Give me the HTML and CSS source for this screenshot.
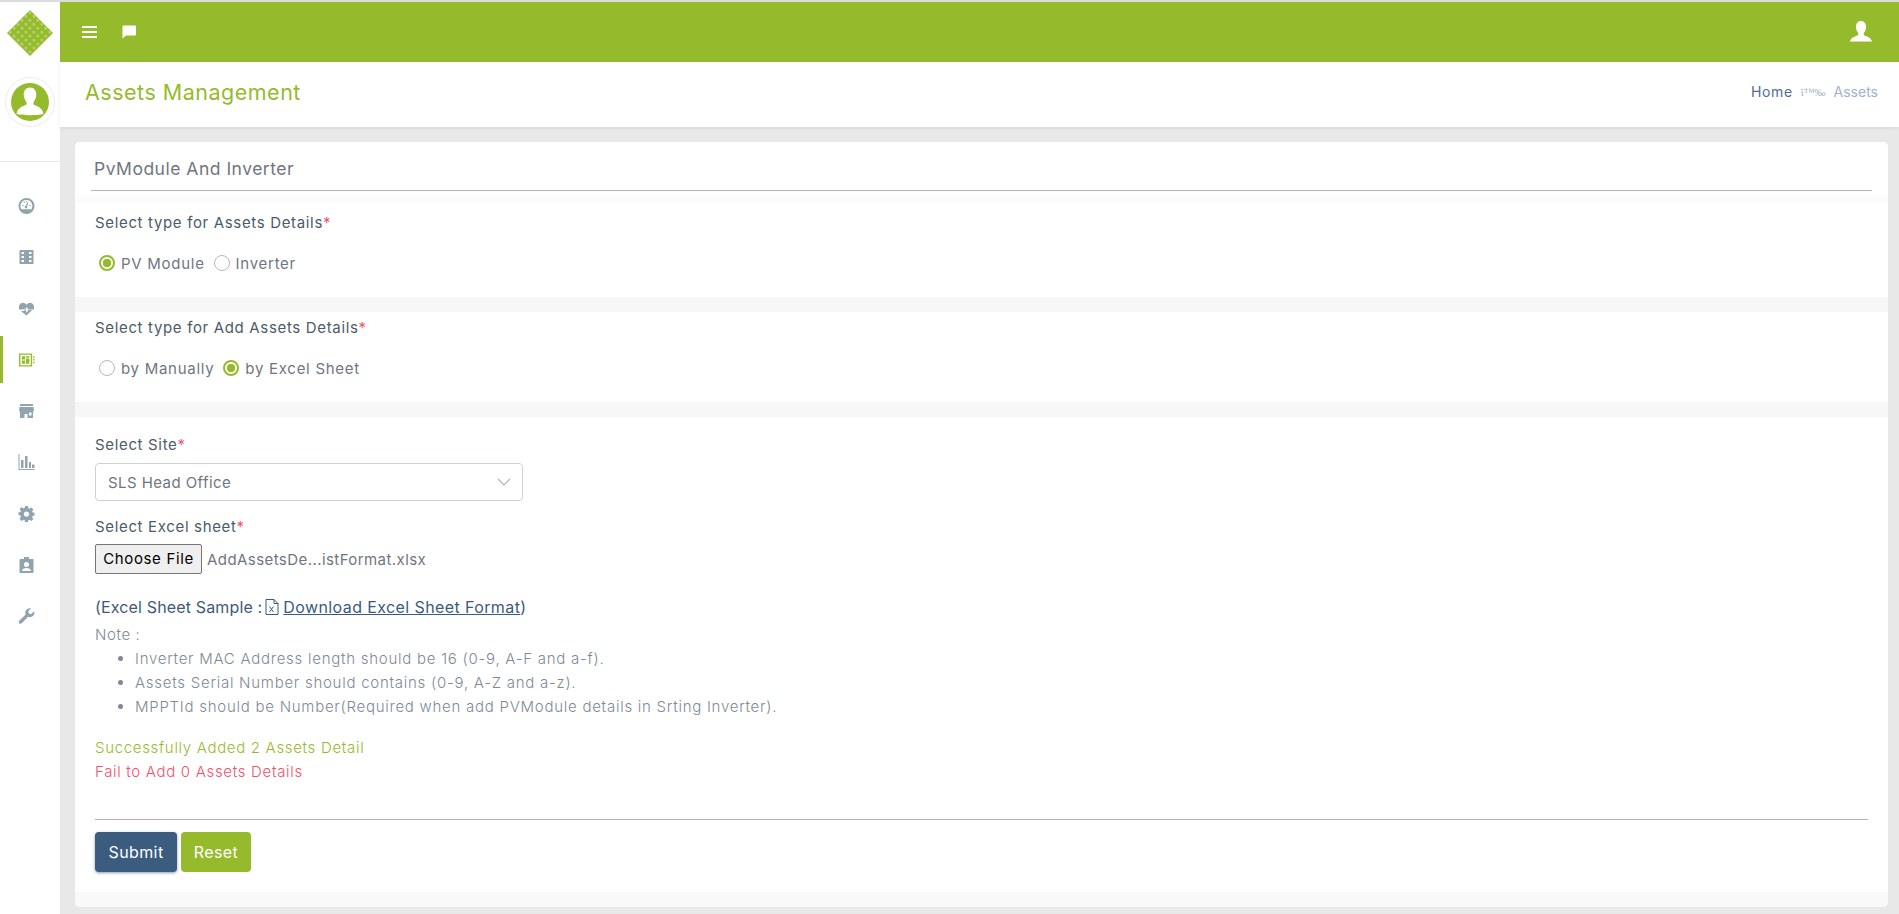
FILE: index.html
```html
<!DOCTYPE html>
<html lang="en">
<head>
<meta charset="utf-8">
<title>Assets Management</title>
<link rel="stylesheet" href="styles.css">
</head>
<body>
<div class="app">
  <aside class="sidebar">
    <div class="logo-box">
      <svg class="logo" viewBox="0 0 46 46" width="46" height="46">
        <defs><pattern id="dots" width="5.6" height="5.6" patternUnits="userSpaceOnUse" patternTransform="rotate(45 23 23)"><rect width="5.6" height="5.6" fill="#95bb2d"/><circle cx="2.8" cy="2.8" r="1.5" fill="#b9d477"/></pattern></defs>
        <polygon points="23,0 46,23 23,46 0,23" fill="url(#dots)"/>
      </svg>
    </div>
    <div class="avatar-box">
      <div class="avatar-ring">
        <svg viewBox="0 0 38 38" width="38" height="38"><circle cx="19" cy="19" r="19" fill="#95bb2d"/><path d="M19 4.500c3.800 0 6.300 2.800 6.300 7 0 3.200-1.300 5.800-2.800 7.500v2.500c2.500 1.700 8.500 2 10 9.500-3.500 .8-8.500 1.200-13.500 1.200s-10-.4-13.500-1.200c1.500-7.500 7.500-7.800 10-9.500V19c-1.500-1.700-2.800-4.300-2.800-7.500 0-4.200 2.500-7 6.300-7z" fill="#fff"/></svg>
      </div>
    </div>
    <nav class="nav">
      <a class="nav-item"><svg viewBox="0 0 16 16"><path fill-rule="evenodd" d="M8 0a8 8 0 1 1 0 16A8 8 0 0 1 8 0zm0 2a6 6 0 0 0-5 9.300h10A6 6 0 0 0 8 2zM7.300 7.800 9 4.200l.9.400-1.300 3.800A1.300 1.300 0 1 1 7.300 7.800zM3.800 7h1.300v1H3.800zm7.100 0h1.300v1h-1.300zM5 4.300l.7-.7.900.9-.7.700zM7.500 3h1v1.300h-1z"/></svg></a>
      <a class="nav-item"><svg viewBox="0 0 16 16"><path fill-rule="evenodd" d="M1.500 1h13a.5.500 0 0 1 .5.500v13a.5.500 0 0 1-.5.500h-13a.5.500 0 0 1-.5-.500v-13a.5.500 0 0 1 .5-.500zM3 3v2h2.500V3zm0 4v2h2.500V7zm0 4v2h2.500v-2zm7.500-8v2H13V3zm0 4v2H13V7zm0 4v2H13v-2z"/></svg></a>
      <a class="nav-item"><svg viewBox="0 0 18 16"><path d="M9 15 3 10h3.500l1-2 1.800 4 1.500-3H15zM1.200 8.500C.2 4.500 2.500 1.500 5.200 1.500 6.800 1.500 8 2.400 9 3.500c1-1.100 2.200-2 3.800-2 2.700 0 5 3 4 7h-6l-1.500-3-1.800 3.800-1-2-.6 1.200z"/></svg></a>
      <a class="nav-item active"><svg viewBox="0 0 18 16"><path fill-rule="evenodd" d="M1 1h14v14H1zm1.500 1.500v11h11v-11zM4 4h3.500v3.500H4zm4.500 0H12v1.500H8.500zm0 2.500H12V12H8.500zM4 8.500h3.500V12H4zM16 4h1.500v1.500H16zm0 3h1.500v1.500H16zm0 3h1.500v1.500H16z"/></svg></a>
      <a class="nav-item"><svg viewBox="0 0 16 16"><path fill-rule="evenodd" d="M1.500 1h13v2h-13zM1 4h14l.5 4h-1v7H9v-4H6v4H1.500V8h-1zM10.500 9.500v3H13v-3z"/></svg></a>
      <a class="nav-item"><svg viewBox="0 0 16 16"><path d="M0 0h1v15h15v1H0zM2.500 6h2.500v8H2.500zM6.500 2h2.500v12H6.500zM10.500 8h2v6h-2zM13.500 10.500H16V14h-2.500z"/></svg></a>
      <a class="nav-item"><svg viewBox="0 0 16 16"><path fill-rule="evenodd" d="M6.600 0h2.800l.4 2.200 1.200.5L12.900 1.400l2 2-1.300 1.900.5 1.200 1.900.3v2.800l-1.900.4-.5 1.200 1.300 1.900-2 2-1.900-1.300-1.200.5-.4 1.700H6.600l-.4-1.800-1.200-.5-1.900 1.300-2-2L2.400 10.600l-.5-1.200L0 9V6.400l1.900-.4.500-1.200L1.100 3l2-2 1.900 1.400 1.200-.5zM8 5.400a2.600 2.600 0 1 0 0 5.200 2.600 2.600 0 0 0 0-5.200z"/></svg></a>
      <a class="nav-item"><svg viewBox="0 0 16 16"><path fill-rule="evenodd" d="M5.500 0h5v2H14a1 1 0 0 1 1 1v12a1 1 0 0 1-1 1H2a1 1 0 0 1-1-1V3a1 1 0 0 1 1-1h3.500zM8 5a2.500 2.500 0 1 0 0 5 2.500 2.500 0 0 0 0-5zm-4.500 9h9c0-2-2-3-4.500-3s-4.500 1-4.500 3z"/></svg></a>
      <a class="nav-item"><svg viewBox="0 0 16 16"><path d="M15.600 3.200c.6 2.200-.1 4.300-2 5.400-1.300.7-2.800.7-4 .1L3.500 15c-.9.900-1.900 1.100-2.700.3-.9-.9-.7-1.800.2-2.700l6.200-6C6.500 5.300 6.600 3.700 7.400 2.500 8.500.7 10.500 0 12.500.4L9.800 3.200l.6 2.300 2.400.6z"/></svg></a>
    </nav>
  </aside>
  <div class="main">
    <header class="topbar">
      <div class="topbar-left">
        <svg class="top-icon" viewBox="0 0 16 14" width="16" height="14"><path d="M0 1h15v2H0zM0 6h15v2H0zM0 11h15v2H0z" fill="#fff"/></svg>
        <svg class="top-icon" viewBox="0 0 14 14" width="14" height="14"><path d="M1 .5h12a1 1 0 0 1 1 1v8a1 1 0 0 1-1 1H4L.5 13.500V1.500a1 1 0 0 1 .5-1z" fill="#fff"/></svg>
      </div>
      <svg class="top-user" viewBox="0 0 24 24" width="24" height="24"><path d="M12 1c3.200 0 5 2.500 5 6 0 2.500-1 4.500-2.200 6v2c2 1.300 7 2 8.200 6.500H1c1.200-4.500 6.200-5.200 8.200-6.500v-2C8 11.500 7 9.500 7 7c0-3.500 1.800-6 5-6z" fill="#fff"/></svg>
    </header>
    <div class="titlebar">
      <h1 class="page-title">Assets Management</h1>
      <div class="crumbs"><span class="crumb-home">Home</span><span class="crumb-sep">î™‰</span><span class="crumb-cur">Assets</span></div>
    </div>
    <main class="content">
      <div class="card">
        <section class="panel-head">
          <h2 class="card-title">PvModule And Inverter</h2>
          <hr class="rule">
        </section>
        <section class="panel panel-first">
          <div class="label">Select type for Assets Details<span class="req">*</span></div>
          <div class="radios">
            <span class="radio on"></span><span class="radio-text">PV Module</span>
            <span class="radio"></span><span class="radio-text">Inverter</span>
          </div>
        </section>
        <div class="band"></div>
        <section class="panel panel-second">
          <div class="label">Select type for Add Assets Details<span class="req">*</span></div>
          <div class="radios">
            <span class="radio"></span><span class="radio-text">by Manually</span>
            <span class="radio on"></span><span class="radio-text">by Excel Sheet</span>
          </div>
        </section>
        <div class="band"></div>
        <section class="panel panel-form">
          <div class="label">Select Site<span class="req">*</span></div>
          <div class="select"><span>SLS Head Office</span><svg viewBox="0 0 14 8" width="14" height="8"><path d="M1 1l6 6 6-6" fill="none" stroke="#a9b2bc" stroke-width="1.100"/></svg></div>
          <div class="label label-file">Select Excel sheet<span class="req">*</span></div>
          <div class="file-row"><span class="file-btn">Choose File</span><span class="file-name">AddAssetsDe...istFormat.xlsx</span></div>
          <div class="sample"><span class="sample-text">(Excel Sheet Sample :</span>
            <svg viewBox="0 0 14 16" width="14" height="16"><path d="M1 .5h8l4 4v11H1zM9 .5v4h4" fill="none" stroke="#3a5a80"/><path d="M4.500 7.500l4 5.500M8.500 7.500l-4 5.500" stroke="#3a5a80" fill="none"/></svg>
            <a class="sample-link">Download Excel Sheet Format</a><span>)</span></div>
          <div class="note">Note :</div>
          <ul class="note-list">
            <li>Inverter MAC Address length should be 16 (0-9, A-F and a-f).</li>
            <li>Assets Serial Number should contains (0-9, A-Z and a-z).</li>
            <li>MPPTId should be Number(Required when add PVModule details in Srting Inverter).</li>
          </ul>
          <div class="msg-ok">Successfully Added 2 Assets Detail</div>
          <div class="msg-fail">Fail to Add 0 Assets Details</div>
          <hr class="rule rule-foot">
          <div class="actions"><button class="btn btn-submit">Submit</button><button class="btn btn-reset">Reset</button></div>
        </section>
        <div class="band band-last"></div>
      </div>
    </main>
  </div>
</div>
</body>
</html>
```
FILE: styles.css
```css
* { box-sizing: border-box; }
html, body { margin: 0; height: 100%; overflow: hidden; }
body { font-family: "Inter", "Open Sans", sans-serif; font-size: 15px; letter-spacing: .43px; color: #4a5a6a; background: #fff; }
.app { display: flex; height: 914px; border-top: 2px solid #dcdcdc; }
.sidebar { width: 60px; flex: none; background: #fff; display: flex; flex-direction: column; }
.logo-box { height: 60px; display: flex; justify-content: center; align-items: center; }
.logo { display: block; margin-top: 1px; }
.avatar-box { height: 100px; display: flex; justify-content: center; padding-top: 15px; border-bottom: 1px solid #e8e8e8; flex: none; margin-bottom: 20.500px; }
.avatar-ring { width: 50px; height: 50px; border-radius: 50%; border: 1px solid #ececec; display: flex; align-items: center; justify-content: center; overflow: hidden; }
.nav { display: flex; flex-direction: column; gap: 4.300px; }
.nav-item { height: 47px; display: flex; align-items: center; justify-content: center; border-left: 3px solid transparent; padding-right: 10px; }
.nav-item svg { width: 17px; height: 16px; fill: #90a4ae; }
.nav-item.active { border-left-color: #95bb2d; }
.nav-item.active svg { fill: #95bb2d; }
.main { flex: 1; display: flex; flex-direction: column; min-width: 0; background: #e8e8e8; }
.topbar { height: 60px; flex: none; background: #95bb2d; display: flex; align-items: center; justify-content: space-between; padding: 0 26px 0 22px; }
.topbar-left { display: flex; align-items: center; gap: 24px; }
.top-icon, .top-user { display: block; }
.titlebar { height: 65px; flex: none; background: #fff; display: flex; align-items: center; justify-content: space-between; padding: 0 21px 6px 25px; box-shadow: 0 1px 4px rgba(0,0,0,.08); }
.page-title { margin: 0; font-size: 21.500px; font-weight: 400; color: #95bb2d; letter-spacing: .5px; }
.crumbs { display: flex; align-items: center; font-size: 14px; letter-spacing: 0; }
.crumb-home { color: #4f6d92; letter-spacing: .6px; }
.crumb-sep { color: #9fb3c8; font-family: "Liberation Serif", serif; font-size: 11px; margin: 0 8px; }
.crumb-cur { color: #9fb3c8; }
.content { flex: 1; padding: 15px 11px 0 15px; min-height: 0; }
.card { background: #fff; border-radius: 5px; overflow: hidden; height: 765px; display: flex; flex-direction: column; }
.panel { padding: 0 20px; flex: none; }
.panel-head { height: 60px; padding: 0 16px; flex: none; background: linear-gradient(#fff 50px, #fafafa); }
.card-title { margin: 0; padding: 17px 0 0 3px; font-size: 17.500px; font-weight: 400; letter-spacing: .5px; color: #6f7680; line-height: 20px; height: 48px; }
.rule { margin: 0; border: 0; border-top: 1px solid #b4b4b4; }
.panel-first { height: 95px; padding-top: 11px; }
.panel-second { height: 90px; padding-top: 6px; }
.band { height: 15px; flex: none; background: #f7f7f7; }
.label { line-height: 20px; color: #4d5b68; letter-spacing: .66px; }
.req { color: #f4516c; }
.radios { display: flex; align-items: center; margin-top: 20px; padding-left: 4px; height: 20px; color: #6f7680; letter-spacing: .72px; }
.radio { width: 16px; height: 16px; border-radius: 50%; border: 1px solid #b8b8b8; margin-right: 6px; background: #fff; flex: none; }
.radio.on { border: 2px solid #95bb2d; background: radial-gradient(circle, #95bb2d 0 4px, #fff 4.500px); }
.radio-text { margin-right: 9px; }
.panel-form { padding-top: 18px; height: 475px; }
.select { margin-top: 8px; width: 428px; height: 38px; border: 1px solid #cdd1da; border-radius: 4px; display: flex; align-items: center; justify-content: space-between; padding: 0 11px 0 12px; color: #6f7680; }
.label-file { margin-top: 16px; }
.file-row { margin-top: 7px; display: flex; align-items: center; height: 30px; }
.file-btn { width: 107px; height: 30px; padding-bottom: 1px; background: #efefef; border: 1px solid #767676; border-radius: 2px; color: #000; letter-spacing: .65px; display: flex; align-items: center; justify-content: center; }
.file-name { margin-left: 5px; color: #6f7680; }
.sample { margin-top: 23px; font-size: 16px; letter-spacing: .3px; line-height: 20px; color: #3f5a75; display: flex; align-items: center; white-space: nowrap; }
.sample-text { letter-spacing: .15px; }
.sample svg { flex: none; margin: 0 4px 0 3px; }
.sample-link { color: #3a5a80; text-decoration: underline; letter-spacing: .4px; }
.note { margin-top: 6px; color: #7e8a96; font-weight: 300; line-height: 24px; letter-spacing: .6px; }
.note-list { margin: 0; padding: 0 0 0 40px; color: #7e8a96; font-weight: 300; letter-spacing: .74px; }
.note-list li { line-height: 24px; }
.msg-ok { margin-top: 17px; color: #95bb2d; font-weight: 300; line-height: 24px; letter-spacing: .68px; }
.msg-fail { color: #f4516c; font-weight: 300; line-height: 24px; letter-spacing: .68px; }
.rule-foot { margin-top: 35px; width: 1773px; }
.actions { margin-top: 12px; display: flex; gap: 4px; }
.btn { height: 40px; border: 0; border-radius: 4px; color: #fff; font-family: inherit; font-size: 16px; letter-spacing: .4px; padding: 0; }
.btn-submit { width: 82px; background: #3b5b7f; box-shadow: 0 1px 3px rgba(59,91,127,.6); }
.btn-reset { width: 70px; background: #95bb2d; }
.band-last { flex: 1; background: #f9f9f9; }
```
